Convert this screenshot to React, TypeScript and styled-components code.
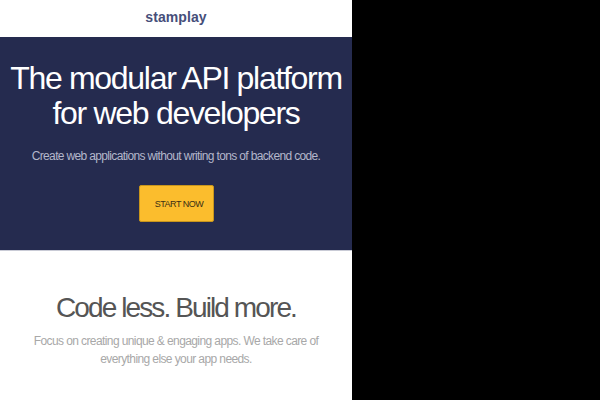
import React from "react";
import styled, { createGlobalStyle } from "styled-components";

const Global = createGlobalStyle`
  html, body { margin: 0; padding: 0; background: #000; }
  body { font-family: "Liberation Sans", Arial, sans-serif; }
`;

const Page = styled.div`
  width: 352px;
  background: #fff;
  min-height: 400px;
`;

const Header = styled.header`
  height: 37px;
  box-sizing: border-box;
  padding-bottom: 3px;
  display: flex;
  align-items: center;
  justify-content: center;
  background: #fff;
`;

const Logo = styled.div`
  font-weight: bold;
  font-size: 14px;
  letter-spacing: 0.1px;
  color: #464e7a;
`;

const Hero = styled.section`
  background: #252b4f;
  height: 214px;
  display: flex;
  flex-direction: column;
  align-items: center;
  box-sizing: border-box;
  padding-top: 24px;
  border-bottom: 1px solid #c9cbd6;
`;

const Title = styled.h1`
  margin: 0;
  font-weight: normal;
  font-size: 32px;
  line-height: 35px;
  letter-spacing: -1.3px;
  color: #fff;
  text-align: center;
  white-space: nowrap;
`;

const Sub = styled.p`
  margin: 18px 0 0;
  font-size: 12px;
  line-height: 14px;
  letter-spacing: -0.65px;
  color: #b4b7cb;
  white-space: nowrap;
`;

const Button = styled.button`
  margin-top: 22px;
  width: 75px;
  height: 37px;
  box-sizing: border-box;
  border: 1px solid #c8951c;
  border-radius: 2px;
  background: #fbbd2d;
  color: #3a2f14;
  font-family: "Liberation Sans", Arial, sans-serif;
  font-size: 9px;
  letter-spacing: -0.5px;
  padding: 0 0 0 6px;
`;

const Section = styled.section`
  display: flex;
  flex-direction: column;
  align-items: center;
  padding-top: 41px;
`;

const H2 = styled.h2`
  margin: 0;
  font-weight: normal;
  font-size: 28px;
  line-height: 32px;
  letter-spacing: -1.9px;
  color: #555;
`;

const P = styled.p`
  margin: 8px 0 0;
  width: 300px;
  text-align: center;
  font-size: 12px;
  line-height: 18px;
  letter-spacing: -0.6px;
  color: #a8a8a8;
`;

export default function App() {
  return (
    <>
      <Global />
      <Page>
        <Header>
          <Logo>stamplay</Logo>
        </Header>
        <Hero>
          <Title>
            The modular API platform
            <br />
            for web developers
          </Title>
          <Sub>Create web applications without writing tons of backend code.</Sub>
          <Button>START NOW</Button>
        </Hero>
        <Section>
          <H2>Code less. Build more.</H2>
          <P>Focus on creating unique &amp; engaging apps. We take care of everything else your app needs.</P>
        </Section>
      </Page>
    </>
  );
}
